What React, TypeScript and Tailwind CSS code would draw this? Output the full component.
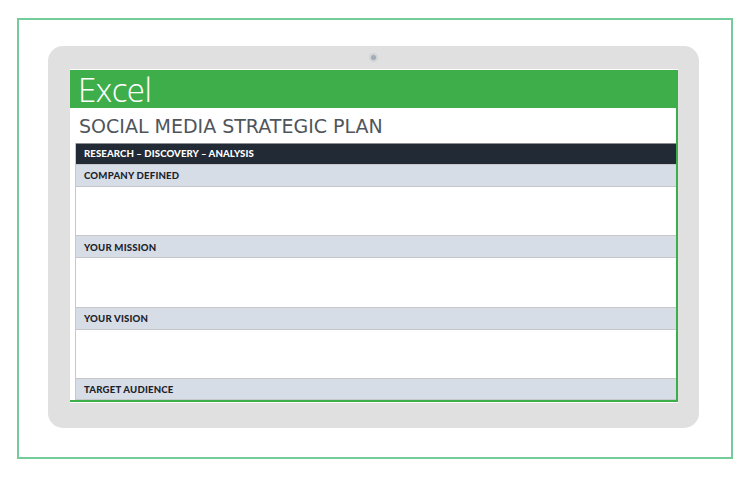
import React from "react";

const labelFont = { fontFamily: '"Lato", "DejaVu Sans", sans-serif' };

function LabelRow({ text, h = "h-[23px]" }: { text: string; h?: string }) {
  return (
    <div
      className={`${h} flex items-center bg-[#d6dde6] border-t border-b border-[#c5c7ca] pl-[8px] pt-[2px] text-[9.6px] font-black text-[#1d232b] tracking-[0.2px]`}
      style={labelFont}
    >
      {text}
    </div>
  );
}

function Blank() {
  return <div className="h-[49px] bg-white" />;
}

export default function App() {
  return (
    <div className="w-[746px] h-[479px] bg-white pt-[18px] pl-[17px]">
      <div className="w-[716px] h-[441px] border-2 border-[#74cc9a] pt-[26px] pl-[29px]">
        <div className="w-[651px] h-[382px] bg-[#e0e0e0] rounded-[15px] flex flex-col items-start">
          <div className="w-full h-[23px] flex items-center justify-center">
            <div className="w-[9px] h-[9px] rounded-full bg-[#cfd4d9] flex items-center justify-center">
              <div className="w-[5px] h-[5px] rounded-full bg-[#a3abb4]" />
            </div>
          </div>
          <div className="ml-[22px] w-[608px] h-[334px] bg-white pt-[1px] flex flex-col">
            <div
              className="h-[38px] bg-[#3dae4a] pl-[8px] flex items-center text-white text-[33px] font-light leading-none tracking-[-0.5px]"
              style={{ fontFamily: '"Open Sans", "Noto Sans", sans-serif' }}
            >
              Excel
            </div>
            <div className="h-[294px] border-r-2 border-b-2 border-[#3dae4a] flex flex-col pl-[5px]">
              <div
                className="h-[35px] flex items-center pl-[4px] pt-[1px] text-[19px] text-[#50555c] tracking-[0px]"
                style={{ fontFamily: '"DejaVu Sans", "Lato", sans-serif' }}
              >
                SOCIAL MEDIA STRATEGIC PLAN
              </div>
              <div className="flex-1 border-l border-[#c9c9c9] flex flex-col overflow-hidden">
                <div
                  className="h-[21px] bg-[#212a35] border-t border-[#8b8f94] flex items-center pl-[8px] pt-[1px] text-white text-[9.6px] font-black tracking-[0.1px]"
                  style={labelFont}
                >
                  RESEARCH – DISCOVERY – ANALYSIS
                </div>
                <LabelRow text="COMPANY DEFINED" />
                <Blank />
                <LabelRow text="YOUR MISSION" />
                <Blank />
                <LabelRow text="YOUR VISION" />
                <Blank />
                <LabelRow text="TARGET AUDIENCE" h="h-[22px]" />
              </div>
            </div>
          </div>
        </div>
      </div>
    </div>
  );
}
